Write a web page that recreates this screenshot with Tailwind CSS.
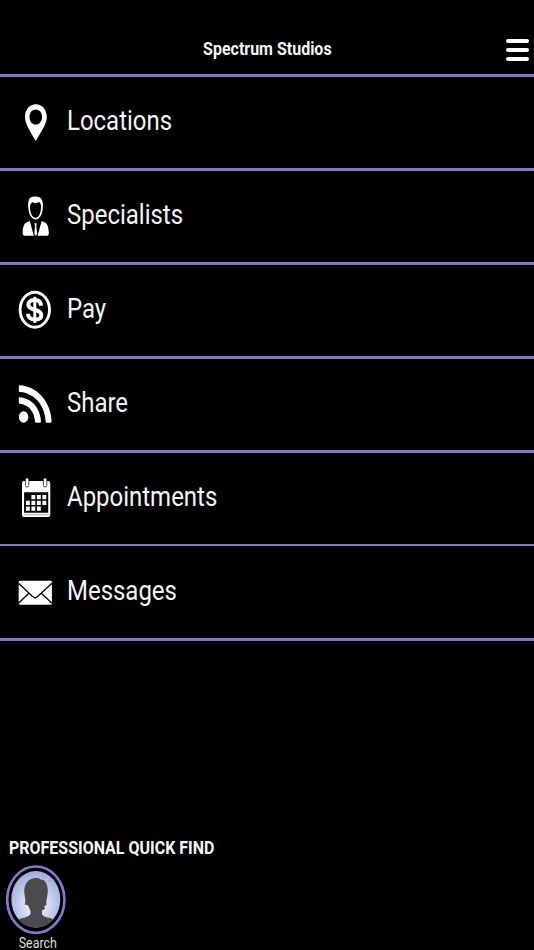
<!DOCTYPE html>
<html lang="en"><head><meta charset="utf-8"><title>Spectrum Studios</title>
<script src="https://cdn.jsdelivr.net/npm/@tailwindcss/browser@4"></script></head>
<body class="bg-black">
<div class="w-[534px] h-[950px] bg-black text-[#f6f6f6] font-[Roboto,sans-serif] overflow-hidden flex flex-col">
<header class="h-[77px] shrink-0 grid grid-cols-[1fr_auto_1fr] border-b-3 border-[#8577c2] pt-5">
<div></div>
<h1 class="w-[128px] h-14 flex items-center justify-center"><span class="text-[18px] font-bold scale-x-[.888] whitespace-nowrap">Spectrum Studios</span></h1>
<button class="h-[59px] flex flex-col justify-center items-end gap-[5px] pr-[5px]" aria-label="Menu"><span class="w-[23px] h-1 rounded-full bg-white"></span><span class="w-[23px] h-1 rounded-full bg-white"></span><span class="w-[23px] h-1 rounded-full bg-white"></span></button>
</header>
<nav class="shrink-0 text-[27.4px] leading-[32px]">
<a class="h-[94px] flex items-center border-b-3 border-[#8577c2]">
<svg class="w-[66.5px] h-[91px] shrink-0" viewBox="0 77 66.5 91" fill="#fff"><path fill-rule="evenodd" d="M35.8 104.2C29.5 104.2 25 109.5 25 117C25 124 30 131 35.8 141C41.5 131 46.8 124 46.8 117C46.8 109.5 42 104.2 35.8 104.2ZM35.7 109.5C39.3 109.5 42.1 112.6 42.1 117S39.3 124.6 35.7 124.6S29.5 121.4 29.5 117S32.2 109.5 35.7 109.5Z"/></svg>
<span class="origin-left scale-x-[.875] -mt-1">Locations</span></a>
<a class="h-[94px] flex items-center border-b-3 border-[#8577c2]">
<svg class="w-[66.5px] h-[91px] shrink-0" viewBox="0 171 66.5 91" fill="#fff"><path fill-rule="evenodd" d="M28.3 208C27.5 200 29.5 196.3 34.5 196.5C40.5 195.8 43.8 199.5 42.8 208C42.5 214.5 39.5 219.5 35.6 219.5S28.8 214.5 28.3 208ZM30.1 205C29.5 211.5 31.8 217.8 35.6 217.8S41.4 211.5 41 204.8L39.2 201.8C36.8 203.8 34.4 203.5 32.2 202Z"/><path d="M29.8 221L33.8 235.7H25C23 235.7 22.5 234.7 22.7 232C22.9 227 24 223.5 26.5 222.5ZM41.7 221L37.5 235.7H46.5C48.6 235.7 49 234.7 48.8 232C48.5 227 47.4 223.5 44.9 222.5ZM34.3 223.3H37L36.3 226L37.2 234L35.7 235.8L34.3 234L35 226Z"/></svg>
<span class="origin-left scale-x-[.875] -mt-1">Specialists</span></a>
<a class="h-[94px] flex items-center border-b-3 border-[#8577c2]">
<svg class="w-[66.5px] h-[91px] shrink-0" viewBox="0 265 66.5 91" fill="none" stroke="#fff"><ellipse cx="34.8" cy="309.7" rx="14.7" ry="17.5" stroke-width="2.9"/><path d="M41 305.8C41 301.5 38.8 300 34.7 300S28.4 301.7 28.4 304.8C28.4 308.2 31.5 308.8 34.7 309.7S41.3 311.7 41.3 315.2S38.5 319.5 34.7 319.5S28 317.5 28 313.7" stroke-width="4"/><path d="M34.8 296.8V323" stroke-width="3"/></svg>
<span class="origin-left scale-x-[.875] -mt-1">Pay</span></a>
<a class="h-[94px] flex items-center border-b-3 border-[#8577c2]">
<svg class="w-[66.5px] h-[91px] shrink-0" viewBox="0 359 66.5 91" fill="#fff"><ellipse cx="23.6" cy="417" rx="4.8" ry="5.7"/><path d="M19.5 385.3C37 386 51 402 51.6 421.2Q51.6 422.8 50.4 422.8H47Q45.7 422.8 45.6 421.2C44.8 405 34 393 20 392.1Q18.8 392 18.8 390.8V386.2Q18.8 385.3 19.5 385.3ZM19.6 397.2C31.5 398 40.3 408 41 421.2Q41 422.8 39.8 422.8H36.2Q35.1 422.8 35 421.2C34.3 411.5 28.2 404.6 19.8 403.8Q18.8 403.7 18.8 402.6V398Q18.8 397.2 19.6 397.2Z"/></svg>
<span class="origin-left scale-x-[.875] -mt-1">Share</span></a>
<a class="h-[93px] flex items-center border-b-2 border-[#8276b5]">
<svg class="w-[66.5px] h-[91px] shrink-0" viewBox="0 453 66.5 91"><path fill="#fff" fill-rule="evenodd" d="M23.8 481H48.4Q50.3 481 50.3 483V515Q50.3 517 48.4 517H23.8Q22 517 22 515V483Q22 481 23.8 481ZM24.1 492.2V512.8H48.2V492.2Z"/><path d="M23.8 514.6H48.5" stroke="#777" stroke-width=".6"/><g fill="#fff" stroke="#000" stroke-width=".7"><rect x="25.4" y="478" width="3.4" height="9" rx="1.5"/><rect x="43.4" y="478" width="3.4" height="9" rx="1.5"/></g><path fill="#fff" d="M31.4 495h3.9v4.2h-3.9zM36.9 495h3.9v4.2h-3.9zM42.4 495h3.9v4.2h-3.9zM25.9 500.8h3.9v4.2h-3.9zM31.4 500.8h3.9v4.2h-3.9zM36.9 500.8h3.9v4.2h-3.9zM42.4 500.8h3.9v4.2h-3.9zM25.9 506.6h3.9v4.2h-3.9zM31.4 506.6h3.9v4.2h-3.9zM36.9 506.6h3.9v4.2h-3.9z"/></svg>
<span class="origin-left scale-x-[.875] -mt-1">Appointments</span></a>
<a class="h-[95px] flex items-center border-b-3 border-[#8577c2]">
<svg class="w-[66.5px] h-[91px] shrink-0" viewBox="0 546.5 66.5 91"><rect x="18.7" y="580.2" width="33.2" height="24" rx="1.2" fill="#fff"/><path d="M18.5 582.8L32.3 595.8L35.1 597.5L37.9 595.8L52 582.8M18.5 602.8L28.9 592.8M52 602.8L41.3 592.8" fill="none" stroke="#000" stroke-width="1.3"/></svg>
<span class="origin-left scale-x-[.875] -mt-0.5">Messages</span></a>
</nav>
<section class="mt-auto h-[114px] shrink-0 pl-[6px]">
<h2 class="pl-[3px] h-[29px] text-[18px] leading-[23px] font-bold whitespace-nowrap"><span class="inline-block origin-left scale-x-[.888]">PROFESSIONAL QUICK FIND</span></h2>
<div class="w-[61px] flex flex-col items-center">
<svg class="w-[61px] h-[70px] shrink-0" viewBox="6 865 61 70"><defs><radialGradient id="sky" cx=".5" cy=".6" r=".6"><stop offset=".3" stop-color="#e0e4fa"/><stop offset="1" stop-color="#9ba9d8"/></radialGradient><clipPath id="face"><ellipse cx="35.8" cy="899.3" rx="24.5" ry="28.3"/></clipPath></defs><ellipse cx="35.8" cy="899.7" rx="28.6" ry="33.2" fill="#000" stroke="#8978d2" stroke-width="2.6"/><g clip-path="url(#face)"><path fill="url(#sky)" d="M11 870h50v58H11z"/><path fill="#4b4b4d" d="M36 878C29 878 24.4 883 24.2 891C24.5 897 26.3 901 24.6 904.6L28 905.3L30.5 911V914C28.5 918 20 917.5 17 921V930H54V920C50 917 43.5 918 42 914V910.5L45 908.8L44.3 906L46.6 905C45.5 900 48 896 47.8 890C47.3 882 44 879 40.5 879.5C39.5 878.3 38 878 36 878Z"/></g></svg>
<span class="text-[14.2px] leading-[17px] scale-x-[.875] ml-[2px] text-[#dedede]">Search</span>
</div></section>
</div></body></html></script>
